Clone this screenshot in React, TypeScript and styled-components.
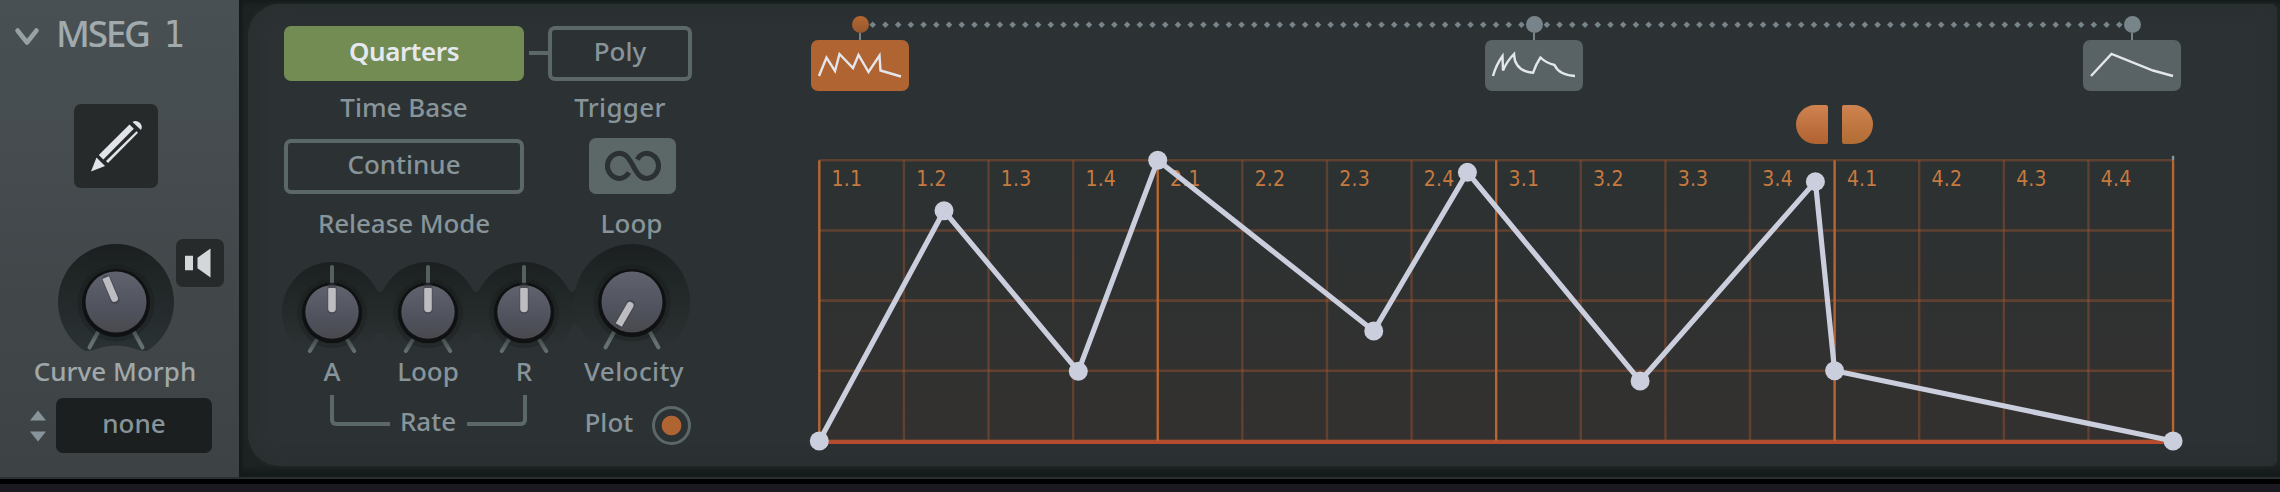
import React, { FC, ReactNode } from "react";
import styled, { createGlobalStyle } from "styled-components";

const GlobalStyle = createGlobalStyle`
  * {
    box-sizing: border-box;
  }
  body {
    margin: 0;
    background: #1a191f;
    font-family: "Noto Sans", "Open Sans", sans-serif;
    overflow: hidden;
  }
  button {
    font-family: inherit;
    padding: 0;
    border: 0;
  }
  svg {
    display: block;
    flex: none;
    overflow: visible;
  }
`;

const Screen = styled.div`
  width: 2280px;
  height: 492px;
  background: #1a191f;
`;

const Module = styled.div`
  display: flex;
  height: 484px;
  border-bottom: 5px solid #000;
`;

const Sidebar = styled.aside`
  flex: none;
  width: 239px;
  height: 479px;
  padding-top: 11px;
  background: linear-gradient(#495053, #3d4244);
  border-bottom: 2px solid #2a3134;
`;

const Header = styled.header`
  display: flex;
  align-items: center;
  height: 46px;
  padding-left: 15px;
  gap: 16px;
`;

const Title = styled.h1`
  margin: 0;
  font-size: 37px;
  font-weight: 500;
  line-height: 46px;
  letter-spacing: -2.3px;
  color: #a1aaad;
`;

const TitleNumber = styled.span`
  margin-left: 8px;
  font-family: "DejaVu Sans Condensed", "DejaVu Sans", sans-serif;
  font-size: 37px;
  font-weight: 400;
`;

const IconButton = styled.button<{ $size: number }>`
  display: flex;
  align-items: center;
  justify-content: center;
  width: ${({ $size }) => $size}px;
  height: ${({ $size }) => $size}px;
  border-radius: 7px;
  background: #262a2b;
`;

const PencilRow = styled.div`
  padding: 47px 0 0 74px;
`;

const MorphRow = styled.div`
  display: flex;
  height: 165px;
  padding: 51px 0 0 58px;
  gap: 2px;
`;

const Label = styled.span<{ $track?: number; $light?: boolean; $nudge?: number }>`
  display: block;
  font-size: 26px;
  font-weight: 500;
  line-height: 36px;
  height: 36px;
  letter-spacing: ${({ $track = 0 }) => $track}px;
  padding-left: ${({ $nudge = 0 }) => $nudge}px;
  white-space: nowrap;
  text-align: center;
  color: ${({ $light }) => ($light ? "#a1a8aa" : "#87949a")};
`;

const SidebarLabel = styled(Label)`
  width: 230px;
`;

const Selector = styled.div`
  display: flex;
  align-items: center;
  margin-top: 9px;
  padding-left: 30px;
  gap: 10px;
`;

const SelectorValue = styled.div`
  display: flex;
  justify-content: center;
  width: 156px;
  height: 55px;
  padding-top: 7px;
  border-radius: 7px;
  background: #1b1f20;
`;

const Recess = styled.main`
  flex: 1;
  height: 479px;
  padding: 4px 3px 0 9px;
  background: linear-gradient(#171c1c, #1d2323 8px, #1d2323 465px, #151a1a 474px);
  border-bottom: 2px solid #2a2f30;
  box-shadow: inset 3px 0 3px #151a1a;
`;

const Panel = styled.div`
  display: flex;
  height: 462px;
  border-radius: 32px 6px 6px 32px;
  background: #2c3133;
  box-shadow: inset 0 0 18px #28302e, 0 0 4px #232a2a;
`;

const Controls = styled.section`
  flex: none;
  width: 563px;
  padding: 22px 0 0 36px;
`;

const Columns = styled.div<{ $gap?: number }>`
  display: flex;
  margin-top: ${({ $gap = 0 }) => $gap}px;
`;

const ModeColumn = styled.div`
  width: 240px;
`;

const Connector = styled.div`
  width: 19px;
  height: 4px;
  margin: 25px 0 0 5px;
  background: #5c6768;
`;

const SideColumn = styled.div<{ $indent?: number }>`
  width: 144px;
  margin-left: ${({ $indent = 0 }) => $indent}px;
`;

const ModeButton = styled.button<{ $active?: boolean }>`
  display: block;
  width: 100%;
  height: 55px;
  border: 4px solid ${({ $active }) => ($active ? "#728c54" : "#5c6768")};
  border-radius: 7px;
  background: ${({ $active }) => ($active ? "#728c54" : "transparent")};

  ${Label} {
    margin-top: -5px;
    ${({ $active }) => $active && "color: #e6e8f0; font-weight: 600;"}
  }
`;

const LoopButton = styled.button`
  display: flex;
  align-items: center;
  justify-content: center;
  width: 87px;
  height: 56px;
  margin: -1px 0 0 41px;
  border-radius: 7px;
  background: #5c6768;
`;

const Caption = styled.div<{ $gap: number }>`
  margin-top: ${({ $gap }) => $gap}px;
`;

const KnobRow = styled.div`
  display: flex;
  height: 112px;
  margin-left: -2px;
  align-items: flex-start;
`;

const KnobCell = styled.div<{ $width: number; $top: number; $left?: number }>`
  width: ${({ $width }) => $width}px;
  padding: ${({ $top, $left = 0 }) => `${$top}px 0 0 ${$left}px`};
`;

const KnobLabels = styled.div`
  display: grid;
  grid-template-columns: 96px 96px 96px 124px;
`;

const RateRow = styled.div`
  display: flex;
  align-items: flex-start;
  padding: 6px 0 0 45.5px;
`;

const Bracket = styled.div<{ $side: "left" | "right" }>`
  width: 60px;
  height: 31px;
  border: 0 solid #5c6768;
  border-bottom-width: 4px;
  border-${({ $side }) => $side}-width: 4px;
  border-bottom-${({ $side }) => $side}-radius: 6px;
`;

const RateLabel = styled(Label)`
  width: 77px;
  margin-top: 8px;
`;

const PlotLabel = styled(Label)`
  width: 46px;
  margin: 9px 21px 0 58px;
`;

const PlotToggle = styled.button`
  width: 39px;
  height: 39px;
  margin-top: 11px;
  border: 3.5px solid #5c6768;
  border-radius: 50%;
  background: radial-gradient(circle, #b06432 9.4px, transparent 10.2px);
`;

const Editor = styled.section`
  width: 1370px;
  padding-top: 12px;
`;

const Presets = styled.div`
  position: relative;
  display: flex;
  height: 76px;
`;

const DottedTrack = styled.svg`
  position: absolute;
  left: 0;
  top: 0;
`;

const Preset = styled.div<{ $before: number }>`
  position: relative;
  display: flex;
  flex-direction: column;
  align-items: center;
  width: 98px;
  margin-left: ${({ $before }) => $before}px;
`;

const PresetNode = styled.div<{ $active?: boolean }>`
  width: 17px;
  height: 17px;
  border-radius: 50%;
  background: ${({ $active }) => ($active ? "linear-gradient(#b56631, #95582f)" : "#77848a")};
`;

const PresetStem = styled.div`
  width: 2px;
  height: 7px;
  background: #77848a;
`;

const PresetButton = styled.button<{ $active?: boolean }>`
  width: 98px;
  height: 51px;
  border-radius: 7px;
  background: ${({ $active }) => ($active ? "#b06432" : "#596366")};
`;

const LoopHandles = styled.div`
  display: flex;
  gap: 14px;
  height: 39px;
  margin: 13px 0 0 985px;
`;

const LoopHandle = styled.div<{ $end?: boolean }>`
  width: 31.5px;
  height: 39px;
  border-radius: ${({ $end }) => ($end ? "2px 20px 20px 2px" : "20px 2px 2px 20px")};
  background: linear-gradient(#cf8350, ${({ $end }) => ($end ? "#b16c34" : "#b06230")});
`;

interface KnobProps {
  size: "small" | "large";
  angle: number;
  centerTick?: boolean;
  raised?: boolean;
  bridge?: string;
}

// All coordinates are relative to the knob's centre.
const Knob: FC<KnobProps> = ({ size, angle, centerTick, raised, bridge }) => {
  const large = size === "large";
  const well = large ? 58 : 50;
  const cap = large ? 30.5 : 26.7;
  const id = `${size}${raised ? "Raised" : ""}`;
  const ticks = large
    ? "M-18.3 30.5 L-26.5 45.5 M18.3 30.5 L26.5 45.5"
    : "M-13.7 25 L-22.2 39 M13.7 25 L22.2 39";
  return (
    <svg
      width={well * 2}
      height={well * 2}
      viewBox={`${-well} ${-well} ${well * 2} ${well * 2}`}
    >
      <defs>
        <linearGradient id={`${id}Well`} gradientUnits="userSpaceOnUse" x1="0" y1={-well} x2="0" y2={large ? 48 : 36}>
          <stop offset="0" stopColor="#1b1f20" />
          <stop offset="0.25" stopColor="#1f2424" />
          <stop offset="1" stopColor={raised ? "#2b3234" : "#2c3133"} />
        </linearGradient>
        <linearGradient id={`${id}Cap`} x1="0" y1="0" x2="0" y2="1">
          <stop offset="0" stopColor="#60636d" />
          <stop offset="0.6" stopColor="#50535d" />
          <stop offset="1" stopColor="#494a4f" />
        </linearGradient>
        <linearGradient id={`${id}Tick`} gradientUnits="userSpaceOnUse" x1="0" y1="24" x2="0" y2="40">
          <stop offset="0" stopColor="#394041" />
          <stop offset="1" stopColor="#65716f" />
        </linearGradient>
      </defs>
      {bridge && <path d={bridge} fill={`url(#${id}Well)`} />}
      {raised ? (
        <path
          d="M-32 48.4 A58 58 0 1 1 32 48.4 Q26 50 18 46.5 Q9 43.5 0 43.5 Q-9 43.5 -18 46.5 Q-26 50 -32 48.4 Z"
          fill={`url(#${id}Well)`}
        />
      ) : (
        <circle r={well} fill={`url(#${id}Well)`} />
      )}
      <circle cy={large ? 1 : 1.5} r={cap + 8} fill="#111415" opacity="0.25" />
      <path d={ticks} stroke={`url(#${id}Tick)`} strokeWidth="4" strokeLinecap="round" />
      {centerTick && <path d="M0 -45 V-28" stroke="#56605f" strokeWidth="4" strokeLinecap="round" />}
      <circle cy="1" r={cap + 3.5} fill="#0f1112" />
      <circle r={cap} fill={`url(#${id}Cap)`} />
      <g transform={`rotate(${angle})`}>
        <path d="M0 -2.5 V-24.5" stroke="#3b3d45" strokeWidth="9" strokeLinecap="round" opacity="0.5" />
        <path
          d={large
            ? "M-3.5 -26.5 H3.5 V-4 A3.5 3.5 0 0 1 -3.5 -4 Z"
            : "M-3.8 -23 Q-3.8 -24 -2.8 -24 H2.8 Q3.8 -24 3.8 -23 V-3.5 A3.8 3.8 0 0 1 -3.8 -3.5 Z"}
          fill="#bcbcc1"
        />
      </g>
    </svg>
  );
};

const PencilIcon: FC = () => (
  <svg width="84" height="84" viewBox="0 0 84 84" fill="#e2e4ea">
    <path d="M58.5 18 Q62 15.5 65.8 18.8 Q69 22 67 26 Z" />
    <path d="M55.5 20.5 L59.8 24.8 L29.3 55.5 L24.8 51 Z" />
    <path d="M62.5 27.3 L64 28.8 L34 59 L32 57 Z" />
    <path d="M22.5 53.5 L31 62 L17 67.5 Z" />
  </svg>
);

const SpeakerIcon: FC = () => (
  <svg width="48" height="48" viewBox="0 0 48 48" fill="#d3d7da">
    <path d="M9 16.7 H17 V31.3 H9 Z M21.5 18.7 L34.5 9.5 V38.5 L21.5 29.3 Z" />
  </svg>
);

const InfinityIcon: FC = () => (
  <svg width="60" height="32" viewBox="0 0 60 32" fill="none" stroke="#2c3133" strokeWidth="5">
    <path d="M26 22.5 C23.5 26.5 20.5 28.5 16 28.5 A12.7 12.7 0 0 1 16 3.2 C22 3.2 25 6.5 30 15.8 C35 25.2 38 28.5 44 28.5 A12.7 12.7 0 0 0 44 3.2 C39.5 3.2 36.5 5.2 34.2 9.5" />
  </svg>
);

const LEFT = 8.3;
const TOP = 16.3;
const BEAT = 84.61;
const ROW = 70.17;
const BEATS = 16;

// [beat, level]
const POINTS: [number, number][] = [
  [0, 0],
  [1.474, 0.82],
  [3.061, 0.248],
  [4, 1],
  [6.553, 0.392],
  [7.66, 0.957],
  [9.701, 0.214],
  [11.773, 0.924],
  [12, 0.25],
  [16, 0]
];

const beatX = (beat: number) => LEFT + beat * BEAT;
const levelY = (level: number) => TOP + (1 - level) * ROW * 4;

const GridLabel = styled.text`
  font-family: "DejaVu Sans Condensed", "DejaVu Sans", sans-serif;
  font-size: 21px;
  letter-spacing: 0.2px;
  fill: #c67a3f;
`;

const EnvelopeChart: FC = () => {
  const bottom = levelY(0);
  const right = beatX(BEATS);
  return (
    <svg width="1370" height="310" viewBox="0 0 1370 310">
      <defs>
        <linearGradient id="chartFill" x1="0" y1="0" x2="0" y2="1">
          <stop offset="0" stopColor="#2c3132" />
          <stop offset="1" stopColor="#333130" />
        </linearGradient>
      </defs>
      <rect x={LEFT} y={TOP} width={right - LEFT} height={bottom - TOP} fill="url(#chartFill)" />
      {[0, 1, 2, 3].map(row => (
        <path key={row} d={`M${LEFT} ${TOP + row * ROW} H${right}`} stroke="#b05a30" strokeOpacity="0.38" strokeWidth="2.6" />
      ))}
      {Array.from({ length: BEATS }, (_, beat) => beat % 4 !== 0 && (
        <path key={beat} d={`M${beatX(beat)} ${TOP} V${bottom}`} stroke="#b05a30" strokeOpacity="0.38" strokeWidth="2.4" />
      ))}
      <path d={`M${LEFT} ${bottom + 1} H${right}`} stroke="#b84a30" strokeWidth="4" />
      <path d={`M${LEFT} ${bottom - 0.8} H${right}`} stroke="#a1532e" strokeWidth="1" />
      {[0, 4, 8, 12, 16].map(beat => (
        <path key={beat} d={`M${beatX(beat)} ${TOP} V${bottom}`} stroke="#b86631" strokeWidth="2.4" />
      ))}
      <path d={`M${right} ${TOP} V${TOP - 4.5}`} stroke="#87949a" strokeWidth="2.4" />
      {Array.from({ length: BEATS }, (_, beat) => (
        <GridLabel key={beat} x={beatX(beat) + 12.3} y={42}>
          {`${Math.floor(beat / 4) + 1}.${(beat % 4) + 1}`}
        </GridLabel>
      ))}
      <polyline
        points={POINTS.map(([beat, level]) => `${beatX(beat)},${levelY(level)}`).join(" ")}
        fill="none"
        stroke="#cbcfdd"
        strokeWidth="5.2"
        strokeLinejoin="round"
      />
      {POINTS.map(([beat, level]) => (
        <circle key={beat} cx={beatX(beat)} cy={levelY(level)} r="9.5" fill="#cbcfdd" />
      ))}
    </svg>
  );
};

const PRESETS = [
  { before: 0, active: true, shape: "M8 36 L15.5 17.5 L24 31 L28.5 14 L42 28 L47.5 15 L57.5 32 L68.5 15.5 L69.5 30.5 L90 36.5" },
  { before: 576, active: false, shape: "M8 36 Q11 25 17.5 16 L18 30.5 Q22 21 29 14 Q29.5 31 48 32.8 Q51 24 55.5 17.5 Q61 23 69.5 25 Q74 35 90 36" },
  { before: 500, active: false, shape: "M8 36 L28.5 14 L70 30.5 L90 36" }
];

interface LabeledProps {
  gap: number;
  track?: number;
  nudge?: number;
  children: ReactNode;
}

const Labeled: FC<LabeledProps> = ({ gap, track, nudge, children }) => (
  <Caption $gap={gap}>
    <Label $track={track} $nudge={nudge}>{children}</Label>
  </Caption>
);

const SidebarPane: FC = () => (
  <Sidebar>
    <Header>
      <svg width="25" height="18" viewBox="0 0 25 18">
        <path d="M2.5 5.5 L12 17.5 L21.5 5.5" fill="none" stroke="#98a2a5" strokeWidth="4.5" strokeLinecap="round" strokeLinejoin="round" />
      </svg>
      <Title>MSEG <TitleNumber>1</TitleNumber></Title>
    </Header>
    <PencilRow>
      <IconButton $size={84}><PencilIcon /></IconButton>
    </PencilRow>
    <MorphRow>
      <KnobCell $width={116} $top={5}>
        <Knob size="large" angle={-23} raised />
      </KnobCell>
      <IconButton $size={48}><SpeakerIcon /></IconButton>
    </MorphRow>
    <SidebarLabel $light>Curve Morph</SidebarLabel>
    <Selector>
      <svg width="16" height="32" viewBox="0 0 16 32" fill="#87949a">
        <path d="M0 10.5 L8 0.5 L16 10.5 Z M0 21.5 H16 L8 31.5 Z" />
      </svg>
      <SelectorValue><Label>none</Label></SelectorValue>
    </Selector>
  </Sidebar>
);

const App: FC = () => (
  <Screen>
    <GlobalStyle />
    <Module>
      <SidebarPane />
      <Recess>
        <Panel>
          <Controls>
            <Columns>
              <ModeColumn>
                <ModeButton $active><Label $track={-0.4}>Quarters</Label></ModeButton>
                <Labeled gap={8}>Time Base</Labeled>
              </ModeColumn>
              <Connector />
              <SideColumn>
                <ModeButton><Label>Poly</Label></ModeButton>
                <Labeled gap={8} track={0.3}>Trigger</Labeled>
              </SideColumn>
            </Columns>
            <Columns $gap={14}>
              <ModeColumn>
                <ModeButton><Label>Continue</Label></ModeButton>
                <Labeled gap={11} track={-0.1}>Release Mode</Labeled>
              </ModeColumn>
              <SideColumn $indent={24}>
                <LoopButton><InfinityIcon /></LoopButton>
                <Labeled gap={11} nudge={23}>Loop</Labeled>
              </SideColumn>
            </Columns>
            <KnobRow>
              {["A", "Loop", "R"].map(name => (
                <KnobCell key={name} $width={96} $top={20.7}>
                  <Knob
                    size="small"
                    angle={0}
                    centerTick
                    bridge={name === "R"
                      ? "M40 -29 Q45 -20 48 -20 L54 -24 V16 L50 11 Q45 14 40 27 Z"
                      : "M40 -29 Q45 -20 48 -20 Q51 -20 56 -29 V29 Q51 21 48 21 Q45 21 40 29 Z"}
                  />
                </KnobCell>
              ))}
              <KnobCell $width={120} $top={3.3} $left={4.3}>
                <Knob size="large" angle={210} />
              </KnobCell>
            </KnobRow>
            <KnobLabels>
              <Label>A</Label>
              <Label $track={-0.1}>Loop</Label>
              <Label>R</Label>
              <Label $track={0.4}>Velocity</Label>
            </KnobLabels>
            <RateRow>
              <Bracket $side="left" />
              <RateLabel>Rate</RateLabel>
              <Bracket $side="right" />
              <PlotLabel>Plot</PlotLabel>
              <PlotToggle />
            </RateRow>
          </Controls>
          <Editor>
            <Presets>
              <DottedTrack width="1370" height="18" viewBox="0 0 1370 18">
                {Array.from({ length: 99 }, (_, i) => (
                  <path key={i} d={`M${61.7 + i * 12.72} 5.5 l3.3 3.3 l-3.3 3.3 l-3.3 -3.3 Z`} fill="#77848a" />
                ))}
              </DottedTrack>
              {PRESETS.map(({ before, active, shape }) => (
                <Preset key={shape} $before={before}>
                  <PresetNode $active={active} />
                  <PresetStem />
                  <PresetButton $active={active}>
                    <svg width="98" height="51" viewBox="0 0 98 51">
                      <path d={shape} fill="none" stroke="#e3e6ec" strokeWidth="2.4" />
                    </svg>
                  </PresetButton>
                </Preset>
              ))}
            </Presets>
            <LoopHandles>
              <LoopHandle />
              <LoopHandle $end />
            </LoopHandles>
            <EnvelopeChart />
          </Editor>
        </Panel>
      </Recess>
    </Module>
  </Screen>
);

export default App;
